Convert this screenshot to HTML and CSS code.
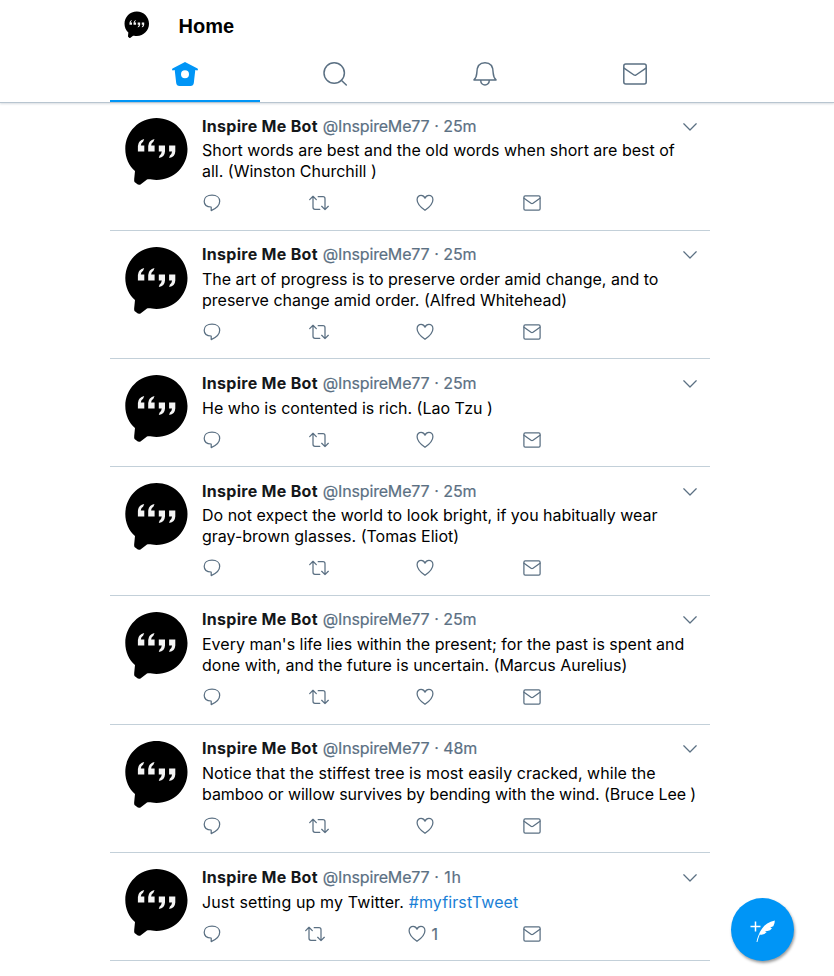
FILE: index.html
```html
<!DOCTYPE html>
<html lang="en">
<head>
<meta charset="utf-8">
<title>Home</title>
<link rel="stylesheet" href="styles.css">
</head>
<body>
<svg class="defs" aria-hidden="true">
  <symbol id="avatar" viewBox="0 0 66 70">
    <path fill="#000" d="M32.500 1C50 1 63.500 15 63.500 32S50 63 32.500 63C28 63 26 62 23 62.500L16.500 67.500Q14.500 68.500 12.500 66.500L10.500 65Q10 64 10.200 62L11 54C5 49 1.300 41 1.300 32 1.300 15 15 1 32.500 1Z"/>
    <g fill="#f4f4f4">
      <path id="open" d="M20.200 22L19.100 24.800Q17 26 16.800 28.500H20.300V34.400H13.900V29Q14.200 23.300 20.200 22Z"/>
      <use href="#open" x="10.300"/>
      <path id="close" d="M34.800 28.600H41V34.500Q40.700 40 34.800 41.100L35.600 38.400Q37.500 37.300 37.800 34.600H34.800Z"/>
      <use href="#close" x="10.300"/>
    </g>
  </symbol>
  <symbol id="reply" viewBox="0 0 18 18"><path d="M9 1.200C13.800 1.200 16.700 3.700 16.700 7.300 16.700 11.800 12.500 14.800 8.200 16.600V13C3.800 12.900 1.200 10.500 1.200 7.200 1.200 3.600 4.400 1.200 9 1.200Z"/></symbol>
  <symbol id="retweet" viewBox="0 0 20 16"><path d="M.700 4.600L4 1.300 7.300 4.600M4 1.300V12.300Q4 14.300 6 14.300H10.800M9.200 1.700H14Q16 1.700 16 3.700V14.500M12.700 11.300L16 14.600 19.300 11.300"/></symbol>
  <symbol id="heart" viewBox="0 0 18 18"><path d="M9 16.300C5 13.500 1.100 9.800 1.100 5.700 1.100 3.100 2.900 1.300 5.100 1.300 6.900 1.300 8.300 2.400 9 4.200 9.700 2.400 11.100 1.300 12.900 1.300 15.100 1.300 16.900 3.100 16.900 5.700 16.900 9.800 13 13.500 9 16.300Z"/></symbol>
  <symbol id="mail" viewBox="0 0 18 16"><rect x=".9" y=".9" width="16.200" height="14.200" rx="1.300"/><path d="M1 3.200L8 8.300Q9 9 10 8.300L17 3.200"/></symbol>
  <symbol id="chevron" viewBox="0 0 14 8"><path d="M.8.800L7 7 13.200.800"/></symbol>
</svg>

<header class="header">
  <div class="column">
    <div class="title-bar">
      <svg class="me"><use href="#avatar"/></svg>
      <h1>Home</h1>
    </div>
    <nav class="tabs">
      <a class="tab active"><svg width="26" height="26" viewBox="0 0 26 26"><path fill="#0095f6" fill-rule="evenodd" d="M13 1.100L25.500 7.500Q26.500 8.500 25.300 9.600L23.300 9.100 21.800 22Q21.400 25 18.500 25H7.500Q4.600 25 4.200 22L2.700 9.100.700 9.600Q-.500 8.500.500 7.500ZM13 9.200A4 4 0 1 0 13 17.200 4 4 0 1 0 13 9.200Z"/></svg></a>
      <a class="tab"><svg class="line" width="26" height="26" viewBox="0 0 26 26"><circle cx="12.200" cy="12" r="10.200"/><path d="M19.300 19.200L24.300 24"/></svg></a>
      <a class="tab"><svg class="line" width="26" height="26" viewBox="0 0 26 26"><path d="M2 18.900Q4.500 16.800 4.800 12 4.800 1.800 13 1.800T21.200 12Q21.500 16.800 24 18.900ZM8.700 19.200C8.700 25.500 17.300 25.500 17.300 19.200"/></svg></a>
      <a class="tab"><svg class="line" width="26" height="26" viewBox="0 0 26 26"><rect x="1.800" y="3" width="22.400" height="20" rx="2"/><path d="M2 7.200L12 14Q13 14.700 14 14L24 7.200"/></svg></a>
    </nav>
  </div>
</header>

<main class="feed">
  <article class="tweet first">
    <svg class="avatar"><use href="#avatar"/></svg>
    <div class="body">
      <div class="meta"><b>Inspire Me Bot</b><span class="handle">@InspireMe77 · 25m</span><svg class="chevron"><use href="#chevron"/></svg></div>
      <p><span>Short words are best and the old words when short are best of</span><br><span>all. (Winston Churchill )</span></p>
      <div class="actions"><span><svg class="i18"><use href="#reply"/></svg></span><span><svg class="rt"><use href="#retweet"/></svg></span><span><svg class="i18"><use href="#heart"/></svg></span><span><svg class="ml"><use href="#mail"/></svg></span></div>
    </div>
  </article>
  <article class="tweet">
    <svg class="avatar"><use href="#avatar"/></svg>
    <div class="body">
      <div class="meta"><b>Inspire Me Bot</b><span class="handle">@InspireMe77 · 25m</span><svg class="chevron"><use href="#chevron"/></svg></div>
      <p><span>The art of progress is to preserve order amid change, and to</span><br><span>preserve change amid order. (Alfred Whitehead)</span></p>
      <div class="actions"><span><svg class="i18"><use href="#reply"/></svg></span><span><svg class="rt"><use href="#retweet"/></svg></span><span><svg class="i18"><use href="#heart"/></svg></span><span><svg class="ml"><use href="#mail"/></svg></span></div>
    </div>
  </article>
  <article class="tweet low">
    <svg class="avatar"><use href="#avatar"/></svg>
    <div class="body">
      <div class="meta"><b>Inspire Me Bot</b><span class="handle">@InspireMe77 · 25m</span><svg class="chevron"><use href="#chevron"/></svg></div>
      <p><span>He who is contented is rich. (Lao Tzu )</span></p>
      <div class="actions"><span><svg class="i18"><use href="#reply"/></svg></span><span><svg class="rt"><use href="#retweet"/></svg></span><span><svg class="i18"><use href="#heart"/></svg></span><span><svg class="ml"><use href="#mail"/></svg></span></div>
    </div>
  </article>
  <article class="tweet low tight">
    <svg class="avatar"><use href="#avatar"/></svg>
    <div class="body">
      <div class="meta"><b>Inspire Me Bot</b><span class="handle">@InspireMe77 · 25m</span><svg class="chevron"><use href="#chevron"/></svg></div>
      <p><span>Do not expect the world to look bright, if you habitually wear</span><br><span>gray-brown glasses. (Tomas Eliot)</span></p>
      <div class="actions"><span><svg class="i18"><use href="#reply"/></svg></span><span><svg class="rt"><use href="#retweet"/></svg></span><span><svg class="i18"><use href="#heart"/></svg></span><span><svg class="ml"><use href="#mail"/></svg></span></div>
    </div>
  </article>
  <article class="tweet">
    <svg class="avatar"><use href="#avatar"/></svg>
    <div class="body">
      <div class="meta"><b>Inspire Me Bot</b><span class="handle">@InspireMe77 · 25m</span><svg class="chevron"><use href="#chevron"/></svg></div>
      <p><span>Every man's life lies within the present; for the past is spent and</span><br><span>done with, and the future is uncertain. (Marcus Aurelius)</span></p>
      <div class="actions"><span><svg class="i18"><use href="#reply"/></svg></span><span><svg class="rt"><use href="#retweet"/></svg></span><span><svg class="i18"><use href="#heart"/></svg></span><span><svg class="ml"><use href="#mail"/></svg></span></div>
    </div>
  </article>
  <article class="tweet">
    <svg class="avatar"><use href="#avatar"/></svg>
    <div class="body">
      <div class="meta"><b>Inspire Me Bot</b><span class="handle">@InspireMe77 · 48m</span><svg class="chevron"><use href="#chevron"/></svg></div>
      <p><span class="loose">Notice that the stiffest tree is most easily cracked, while the</span><br><span class="narrow">bamboo or willow survives by bending with the wind. (Bruce Lee )</span></p>
      <div class="actions"><span><svg class="i18"><use href="#reply"/></svg></span><span><svg class="rt"><use href="#retweet"/></svg></span><span><svg class="i18"><use href="#heart"/></svg></span><span><svg class="ml"><use href="#mail"/></svg></span></div>
    </div>
  </article>
  <article class="tweet low last">
    <svg class="avatar"><use href="#avatar"/></svg>
    <div class="body">
      <div class="meta"><b>Inspire Me Bot</b><span class="handle">@InspireMe77 · <span class="hour">1h</span></span><svg class="chevron"><use href="#chevron"/></svg></div>
      <p><span class="wide">Just setting up my Twitter. <a class="tag">#myfirstTweet</a></span></p>
      <div class="actions"><span><svg class="i18"><use href="#reply"/></svg></span><span><svg class="rt"><use href="#retweet"/></svg></span><span class="liked"><svg class="i18"><use href="#heart"/></svg><span class="count">1</span></span><span><svg class="ml"><use href="#mail"/></svg></span></div>
    </div>
  </article>
</main>

<button class="compose" aria-label="Compose">
  <svg width="64" height="64" viewBox="0 0 64 64"><path d="M24.500 23.500V33.500M19.500 28.500H29.500" stroke="#fff" stroke-width="1.500"/><path fill="#fff" d="M25.500 44C27.500 35 32 24.500 43.800 22.500Q44 25.300 42.300 28.200L39.200 29.500 41 30.200Q39.300 32.800 36.500 33L33.700 32.900 35.800 34.100Q32.800 37.500 28.800 36.500 27.300 40 26.400 44Z"/></svg>
</button>
</body>
</html>
```

FILE: styles.css
```css
* { box-sizing: border-box; }
body {
  margin: 0;
  height: 976px;
  overflow: hidden;
  background: #fff;
  color: #000;
  font: 16px/21px Inter, "Liberation Sans", sans-serif;
}
svg { display: block; flex: none; }
.defs { position: absolute; width: 0; height: 0; }
.column, .feed { width: 600px; margin-left: 110px; }

.header {
  height: 103px;
  border-bottom: 1px solid #b8c5d0;
  box-shadow: 0 1px 2px rgba(101, 119, 134, .25);
}
.title-bar { display: flex; align-items: center; height: 52px; padding-left: 14px; }
.me { width: 26px; height: 28px; margin-top: -2px; }
h1 {
  margin: 0 0 0 28.500px;
  font: bold 20px/24px "Liberation Sans", sans-serif;
}
.tabs { display: flex; height: 50px; }
.tab {
  flex: 1;
  display: flex;
  justify-content: center;
  padding-top: 9px;
}
.tab.active { box-shadow: inset 0 -2px #0095f6; }
.line { fill: none; stroke: #5b7083; stroke-width: 1.5; stroke-linecap: round; stroke-linejoin: round; }

.feed {
  display: grid;
  grid-template-columns: 600px;
  grid-template-rows: 128px 128px 108px 129px 129px 128px 108px;
}
.tweet {
  display: flex;
  padding: 13px 14px 0;
  border-bottom: 1px solid #c3d0d9;
}
.tweet.low { padding-top: 14px; }
.avatar { width: 66px; height: 70px; margin-top: 2px; }
.low .avatar, .first .avatar { margin-top: 1px; }
.body { width: 494px; margin-left: 12px; }
.meta { display: flex; align-items: center; height: 21px; }
.meta b { color: #14171a; font-weight: 700; letter-spacing: .29px; }
.handle {
  margin-left: 5px;
  color: #5b7083;
  letter-spacing: -.17px;
  word-spacing: .4px;
  -webkit-text-stroke: .2px #5b7083;
}
.hour { margin-left: 1px; letter-spacing: .6px; }
.chevron { width: 14px; height: 8px; margin: 0 -1px 0 auto; }
p { margin: 4px 0 0; white-space: nowrap; }
.first p, .tight p { margin-top: 3px; }
.loose { letter-spacing: .05px; }
.narrow { letter-spacing: -.06px; }
.wide { letter-spacing: .13px; }
.tag { color: #1b7fd6; }
.actions {
  display: flex;
  height: 20px;
  margin-top: 11px;
  color: #5b7083;
}
.actions > span { display: flex; align-items: center; width: 106.700px; }
.actions svg, .chevron { fill: none; stroke: #5b7083; stroke-width: 1.25; stroke-linecap: round; stroke-linejoin: round; }
.i18 { width: 18px; height: 18px; margin-left: 1px; }
.rt { width: 20px; height: 16px; }
.last .rt { margin-left: -4px; }
.liked .i18 { margin-left: -7px; }
.count { margin-left: 5px; -webkit-text-stroke: .2px #5b7083; }
.ml { width: 18px; height: 16px; margin-left: 1px; }

.compose {
  position: fixed;
  left: 731px;
  top: 898px;
  width: 63px;
  height: 63px;
  padding: 0;
  border: 0;
  border-radius: 50%;
  background: #0095f6;
  box-shadow: 1px 2px 3px rgba(0, 0, 0, .4);
}
```
